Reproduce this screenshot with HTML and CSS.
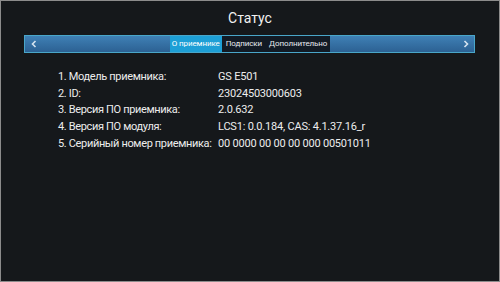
FILE: index.html
```html
<!DOCTYPE html>
<html lang="ru">
<head>
<meta charset="utf-8">
<link rel="stylesheet" href="styles.css">
</head>
<body>
<div class="screen">
  <h1 class="title">Статус</h1>
  <div class="tabbar">
    <svg class="arrow" width="6" height="8" viewBox="0 0 6 8"><path d="M4.5 1 L1.5 4 L4.5 7" fill="none" stroke="#d6e4f0" stroke-width="1.6"/></svg>
    <div class="tabs">
      <span class="tab active">О приемнике</span>
      <span class="tab">Подписки</span>
      <span class="tab">Дополнительно</span>
    </div>
    <svg class="arrow" width="6" height="8" viewBox="0 0 6 8"><path d="M1.5 1 L4.5 4 L1.5 7" fill="none" stroke="#d6e4f0" stroke-width="1.6"/></svg>
  </div>
  <div class="info">
    <span class="label">1. Модель приемника:</span><span class="value">GS E501</span>
    <span class="label">2. ID:</span><span class="value">23024503000603</span>
    <span class="label">3. Версия ПО приемника:</span><span class="value">2.0.632</span>
    <span class="label">4. Версия ПО модуля:</span><span class="value">LCS1: 0.0.184, CAS: 4.1.37.16_r</span>
    <span class="label">5. Серийный номер приемника:</span><span class="value">00 0000 00 00 00 000 00501011</span>
  </div>
</div>
</body>
</html>
```
FILE: styles.css
```css
html, body {
  margin: 0;
  padding: 0;
  background: #15181b;
}
.screen {
  box-sizing: border-box;
  width: 500px;
  height: 282px;
  border: 1px solid #8c8c8c;
  background: #15181b;
  color: #f0f0f0;
  font-family: Roboto, "Noto Sans", sans-serif;
  display: flex;
  flex-direction: column;
}
.title {
  margin: 0;
  padding-top: 8px;
  height: 26px;
  font-size: 14px;
  font-weight: 400;
  line-height: 18px;
  text-align: center;
  color: #f2f2f2;
}
.tabbar {
  margin: 0 24px 0 23px;
  height: 18px;
  box-sizing: border-box;
  border: 1px solid #49a6c9;
  background: linear-gradient(#3f80b5, #2c6193);
  display: flex;
  align-items: center;
  justify-content: space-between;
  padding: 0 5px 0 6px;
}
.tabs {
  display: flex;
  height: 16px;
  background: #121a24;
}
.tab {
  font-size: 8px;
  letter-spacing: -0.1px;
  line-height: 16px;
  padding: 0 3px 0 4px;
  color: #e6e9ee;
  white-space: nowrap;
}
.tab.active {
  background: #1d9fd6;
  color: #ffffff;
  padding: 0 2px 0 2px;
}
.info {
  margin: 15px 0 0 57px;
  display: grid;
  grid-template-columns: 160px auto;
  grid-auto-rows: 16.8px;
  align-items: center;
  font-size: 11px;
  color: #ededed;
  white-space: nowrap;
}
.label {
  letter-spacing: -0.35px;
}
.value {
  letter-spacing: -0.2px;
}
```
